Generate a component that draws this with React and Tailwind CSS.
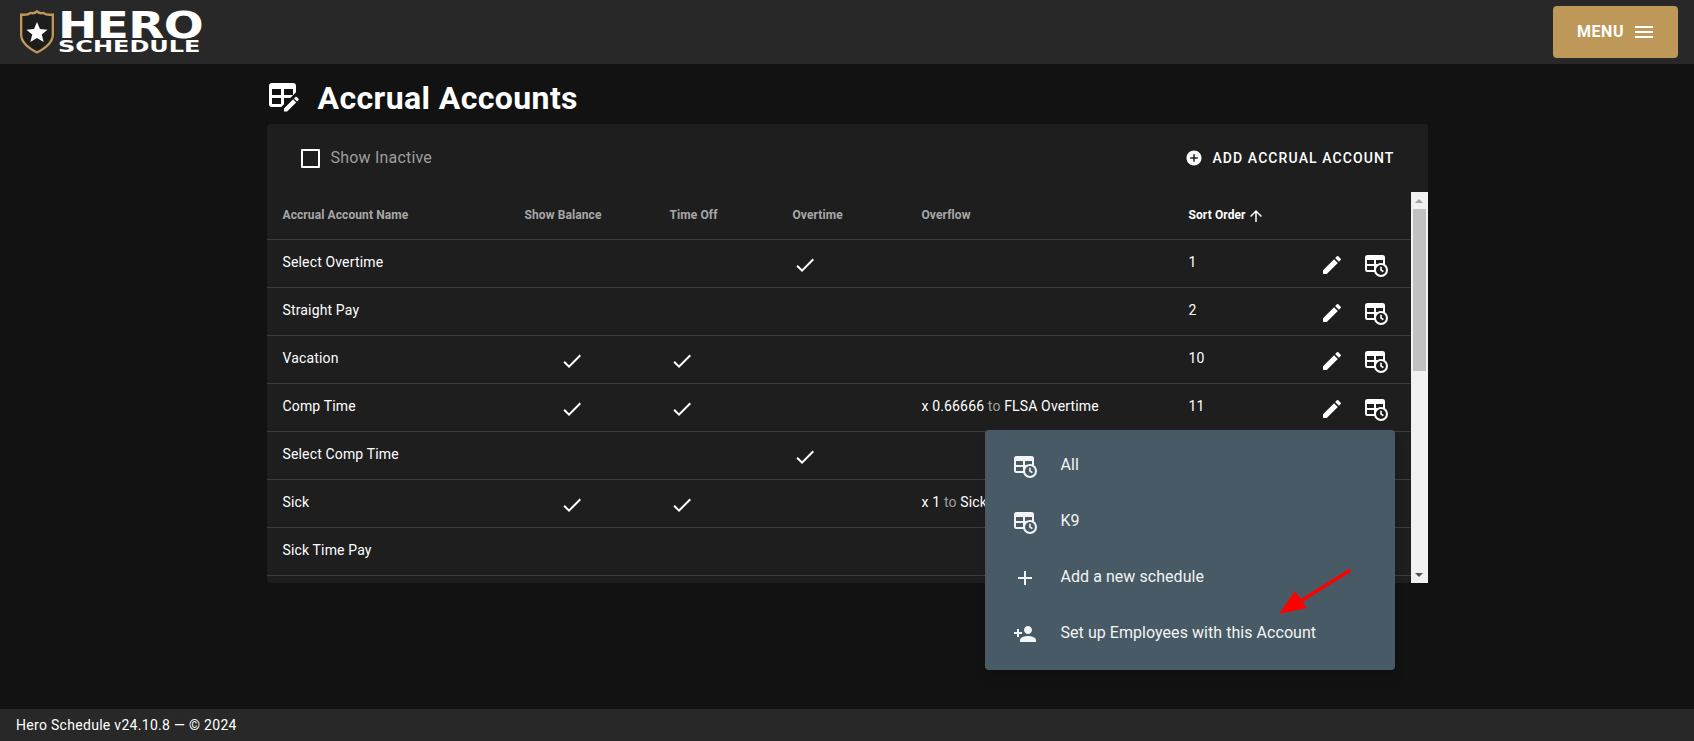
import { MdAdd, MdAddCircle, MdArrowUpward, MdCheck, MdEdit, MdMenu, MdPersonAdd } from "react-icons/md";

const rows = [
  { name: "Select Overtime", overtime: true, sort: "1" },
  { name: "Straight Pay", sort: "2" },
  { name: "Vacation", balance: true, timeOff: true, sort: "10" },
  { name: "Comp Time", balance: true, timeOff: true, rate: "x 0.66666", target: "FLSA Overtime", sort: "11" },
  { name: "Select Comp Time", overtime: true, sort: "12" },
  { name: "Sick", balance: true, timeOff: true, rate: "x 1", target: "Sick Time Pay", sort: "20" },
  { name: "Sick Time Pay", sort: "21" },
];

const cols = "grid grid-cols-[242px_145px_123px_129px_267px_1fr]";

function TableClock({ className, hole }) {
  return (
    <svg viewBox="0 0 24 24" className={className}>
      <path
        fill="currentColor"
        fillRule="evenodd"
        d="M3.500 2h15A2.500 2.500 0 0 1 21 4.500V13h-9v6H3.500A2.500 2.500 0 0 1 1 16.500V4.500A2.500 2.500 0 0 1 3.500 2ZM3 7v4h7V7H3Zm9 0v4h7V7h-7ZM3 13v4h7v-4H3Z"
      />
      <circle cx="17" cy="17" r="6" className={hole} stroke="currentColor" strokeWidth="2" />
      <path d="M17 13.800V17l2.400 1.600" fill="none" stroke="currentColor" strokeWidth="1.600" />
    </svg>
  );
}

function Logo() {
  return (
    <div className="flex items-center gap-[2px]">
      <svg viewBox="0 0 36 44" className="w-[38px] h-[47px]">
        <path
          d="M18 2c2 2 4 2 6 1.500 2 1.500 5 2 9 1.500v19c0 8-7 13-15 17C10 37 3 32 3 24V5c4 .5 7 0 9-1.500C14 4 16 4 18 2Z"
          fill="#1d1d1d"
          stroke="#bd9859"
          strokeWidth="2.200"
        />
        <path d="M18 12l2.800 6.800 7.200.5-5.500 4.600 1.800 7.100-6.300-3.900-6.300 3.900 1.800-7.100L8 19.300l7.200-.5Z" fill="#fff" />
      </svg>
      <div className="w-[146px] font-['DejaVu_Sans'] font-bold text-white">
        <div className="text-[37px] leading-[27px] h-[27px] origin-left scale-x-[1.27] tracking-[-0.5px]">HERO</div>
        <div className="mt-[1px] text-[16px] leading-[13px] h-[13px] origin-left scale-x-[1.5]">SCHEDULE</div>
      </div>
    </div>
  );
}

function Row({ row }) {
  return (
    <div className={`${cols} h-[48px] items-center border-b border-[#3c3c3c] text-[14px] tracking-[0.15px] text-white pl-[16px]`}>
      <div className="-mt-[2px]">{row.name}</div>
      <div className="pl-[35px]">{row.balance && <MdCheck className="w-6 h-6 mt-[2px]" />}</div>
      <div>{row.timeOff && <MdCheck className="w-6 h-6 mt-[2px]" />}</div>
      <div>{row.overtime && <MdCheck className="w-6 h-6 mt-[2px]" />}</div>
      <div className="-mt-[2px]">
        {row.rate && (
          <span>
            {row.rate} <span className="text-[#9e9e9e]">to</span> {row.target}
          </span>
        )}
      </div>
      <div className="flex items-center">
        <span className="w-[131px] -mt-[2px]">{row.sort}</span>
        <MdEdit className="w-6 h-6 mt-[3px]" />
        <TableClock className="w-6 h-6 ml-[20px] mt-[2px]" hole="fill-[#1e1e1e]" />
      </div>
    </div>
  );
}

function MenuItem({ icon, label }) {
  return (
    <div className="h-[56px] flex items-center text-[16px] tracking-[0.05px] text-[#f2f4f5]">
      <div className="w-[76px] flex justify-center pl-[4px]">{icon}</div>
      <span className="-mt-[3px]">{label}</span>
    </div>
  );
}

export default function App() {
  return (
    <div className="h-screen flex flex-col bg-[#121212] font-['Roboto',sans-serif] overflow-hidden">
      <header className="h-[64px] shrink-0 bg-[#282828] flex items-center justify-between pl-[18px] pr-[16px]">
        <Logo />
        <button className="w-[125px] h-[52px] bg-[#bd9859] rounded flex items-center justify-center gap-[8px] pl-[2px] text-white font-bold text-[16px] tracking-[0.5px]">
          MENU
          <MdMenu className="w-6 h-6" />
        </button>
      </header>

      <main className="relative flex-1 w-[1161px] mx-auto">
        <div className="h-[60px] flex items-center gap-[16px] pt-[7px]">
          <svg viewBox="0 0 24 24" className="w-[36px] h-[36px] -ml-[1px] text-white" fill="currentColor">
            <path d="M21.700 13.350L20.700 14.350L18.650 12.300L19.650 11.300C19.860 11.090 20.210 11.090 20.420 11.300L21.700 12.580C21.910 12.790 21.910 13.140 21.700 13.350M12 18.940L18.060 12.880L20.110 14.930L14.060 21H12V18.940M4 2H18A2 2 0 0 1 20 4V8.170L16.170 12H12V16.170L10.170 18H4A2 2 0 0 1 2 16V4A2 2 0 0 1 4 2M4 6V10H10V6H4M12 6V10H18V6H12M4 12V16H10V12H4Z" />
          </svg>
          <h1 className="text-[32px] font-bold text-white tracking-[0.4px]">Accrual Accounts</h1>
        </div>

        <section className="bg-[#1e1e1e] rounded h-[459px] flex flex-col">
          <div className="h-[68px] shrink-0 flex items-center justify-between pl-[34px] pr-[33px]">
            <label className="flex items-center gap-[11px] text-[16px] tracking-[0.2px] text-[#9e9e9e]">
              <span className="w-[19px] h-[19px] border-2 border-white rounded-[1px]" />
              Show Inactive
            </label>
            <button className="flex items-center gap-[9px] text-white text-[14px] font-medium tracking-[1.100px]">
              <MdAddCircle className="w-[18px] h-[18px]" />
              ADD ACCRUAL ACCOUNT
            </button>
          </div>

          <div className="flex-1 flex min-h-0">
            <div className="flex-1 overflow-hidden">
              <div className={`${cols} h-[48px] items-center border-b border-[#3c3c3c] pl-[16px] text-[12px] font-bold text-[#a8a8a8] tracking-[0.1px]`}>
                <div className="-mt-[2px]">Accrual Account Name</div>
                <div className="-mt-[2px]">Show Balance</div>
                <div className="-mt-[2px]">Time Off</div>
                <div className="-mt-[2px]">Overtime</div>
                <div className="-mt-[2px]">Overflow</div>
                <div className="flex items-center gap-[1px] text-white -mt-[2px]">
                  Sort Order
                  <MdArrowUpward className="w-[18px] h-[18px] mt-[2px]" />
                </div>
              </div>
              {rows.map((row) => (
                <Row key={row.name} row={row} />
              ))}
            </div>
            <div className="w-[17px] bg-[#f1f1f1] flex flex-col items-center">
              <div className="h-[17px] flex items-center">
                <div className="border-x-[4px] border-x-transparent border-b-[4px] border-b-[#a3a3a3]" />
              </div>
              <div className="w-[13px] h-[162px] bg-[#c1c1c1]" />
              <div className="flex-1" />
              <div className="h-[17px] flex items-center">
                <div className="border-x-[4px] border-x-transparent border-t-[4px] border-t-[#505050]" />
              </div>
            </div>
          </div>
        </section>

        {/* row action popup */}
        <div className="absolute left-[718px] top-[366px] w-[410px] py-[8px] bg-[#485a65] rounded shadow-lg">
          <MenuItem icon={<TableClock className="w-6 h-6" hole="fill-[#485a65]" />} label="All" />
          <MenuItem icon={<TableClock className="w-6 h-6" hole="fill-[#485a65]" />} label="K9" />
          <MenuItem icon={<MdAdd className="w-6 h-6" />} label="Add a new schedule" />
          <MenuItem icon={<MdPersonAdd className="w-6 h-6" />} label="Set up Employees with this Account" />
        </div>

        <svg className="absolute left-[1007px] top-[500px] w-[83px] h-[60px]" viewBox="0 0 83 60">
          <path d="M75 7L25 38" stroke="#f00" strokeWidth="3.500" strokeLinecap="round" />
          <path d="M5 50L21 27L33 44Z" fill="#f00" />
        </svg>
      </main>

      <footer className="h-[32px] shrink-0 bg-[#282828] flex items-center pl-[16px] text-[14px] tracking-[0.3px] text-white">
        Hero Schedule v24.10.8 — © 2024
      </footer>
    </div>
  );
}
